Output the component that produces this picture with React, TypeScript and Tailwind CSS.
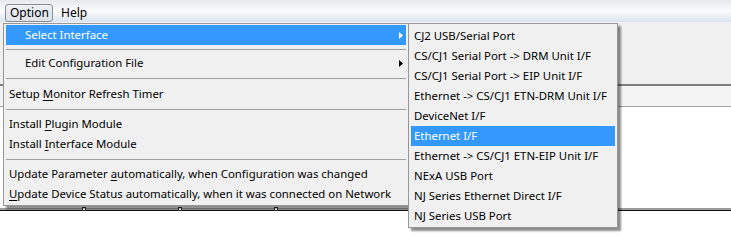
import React from "react";

const font = { fontFamily: '"Noto Sans", "Open Sans", sans-serif' };

function Arrow({ white }: { white?: boolean }) {
  return (
    <svg width="4" height="7" viewBox="0 0 4 7" className="shrink-0">
      <path d="M0 0 L4 3.5 L0 7 Z" fill={white ? "#ffffff" : "#000000"} />
    </svg>
  );
}

function Sep({ h, at }: { h: number; at: number }) {
  return (
    <div style={{ height: h, paddingTop: at }}>
      <div className="mx-[2px] h-0 border-t border-[#a0a0a0]" />
    </div>
  );
}

function U({ children }: { children: React.ReactNode }) {
  return <span className="underline underline-offset-[2px]">{children}</span>;
}

function MainItem({
  children,
  indent,
  hl,
  arrow,
}: {
  children: React.ReactNode;
  indent?: boolean;
  hl?: boolean;
  arrow?: boolean;
}) {
  return (
    <div
      className={`mx-[2px] flex h-[20px] items-center ${indent ? "pl-[19px]" : "pl-[3px]"} pr-[3px] ${
        hl ? "bg-[#3399ff] text-white" : "text-black"
      }`}
    >
      <span className="flex-1 whitespace-nowrap">{children}</span>
      {arrow && <Arrow white={hl} />}
    </div>
  );
}

function SubItem({ children, hl }: { children: React.ReactNode; hl?: boolean }) {
  return (
    <div
      className={`mx-[2px] flex h-[20px] items-center pl-[3px] whitespace-nowrap ${
        hl ? "bg-[#3399ff] text-white" : "text-black"
      }`}
    >
      {children}
    </div>
  );
}

export default function App() {
  return (
    <div className="relative h-[251px] w-[731px] overflow-hidden bg-white text-[11.4px]" style={font}>
      {/* menubar */}
      <div className="h-[23px] bg-gradient-to-b from-[#e6e9ee] via-[#fafbfd] to-[#dce4ef] flex items-end pl-[5px] gap-[4px] border-b border-[#eef1f5] text-[12px]">
        <div className="h-[18px] w-[48px] rounded-[3px] border border-[#8a8c8f] bg-gradient-to-b from-[#eef1f5] to-[#dde2ea] flex items-center pl-[4px] text-black">
          Option
        </div>
        <div className="h-[18px] flex items-center px-[4px] text-black">Help</div>
      </div>

      {/* window background */}
      <div className="h-[61px] bg-[#f0f0f0]" />
      <div className="h-[2px] bg-[#808080]" />
      <div className="h-[21px] bg-[#f3f3f3] border-b border-[#a0a0a0]" />
      <div className="h-[101px] bg-white" />
      <div className="flex h-[2px] items-start bg-[#9c9c9c]">
        <div className="w-[82px]" />
        <div className="h-[4px] w-[4px] -mt-[1px] border border-[#333] bg-white" />
        <div className="w-[92px]" />
        <div className="h-[4px] w-[4px] -mt-[1px] border border-[#333] bg-white" />
        <div className="w-[92px]" />
        <div className="h-[4px] w-[4px] -mt-[1px] border border-[#333] bg-white" />
      </div>
      <div className="h-[1px] bg-[#111]" />

      {/* main dropdown menu */}
      <div className="absolute left-[3px] top-[23px] w-[406px] border border-[#979797] bg-[#f0f0f0] pt-[1px] pb-[1px] shadow-[3px_3px_2px_rgba(0,0,0,0.45)]">
        <MainItem indent hl arrow>
          Select Interface
        </MainItem>
        <Sep h={8} at={4} />
        <MainItem indent arrow>
          Edit Configuration File
        </MainItem>
        <Sep h={11} at={5} />
        <MainItem>
          Setup <U>M</U>onitor Refresh Timer
        </MainItem>
        <Sep h={10} at={5} />
        <MainItem>
          Install <U>P</U>lugin Module
        </MainItem>
        <MainItem>
          Install <U>I</U>nterface Module
        </MainItem>
        <Sep h={10} at={5} />
        <MainItem>
          Update Parameter <U>a</U>utomatically, when Configuration was changed
        </MainItem>
        <MainItem>
          <U>U</U>pdate Device Status automatically, when it was connected on Network
        </MainItem>
      </div>

      {/* submenu */}
      <div className="absolute left-[408px] top-[23px] w-[210px] border border-[#979797] bg-[#f0f0f0] pt-[2px] pb-[1px] shadow-[3px_3px_2px_rgba(0,0,0,0.45)]">
        <SubItem>CJ2 USB/Serial Port</SubItem>
        <SubItem>CS/CJ1 Serial Port -&gt; DRM Unit I/F</SubItem>
        <SubItem>CS/CJ1 Serial Port -&gt; EIP Unit I/F</SubItem>
        <SubItem>Ethernet -&gt; CS/CJ1 ETN-DRM Unit I/F</SubItem>
        <SubItem>DeviceNet I/F</SubItem>
        <SubItem hl>Ethernet I/F</SubItem>
        <SubItem>Ethernet -&gt; CS/CJ1 ETN-EIP Unit I/F</SubItem>
        <SubItem>NExA USB Port</SubItem>
        <SubItem>NJ Series Ethernet Direct I/F</SubItem>
        <SubItem>NJ Series USB Port</SubItem>
      </div>
    </div>
  );
}
